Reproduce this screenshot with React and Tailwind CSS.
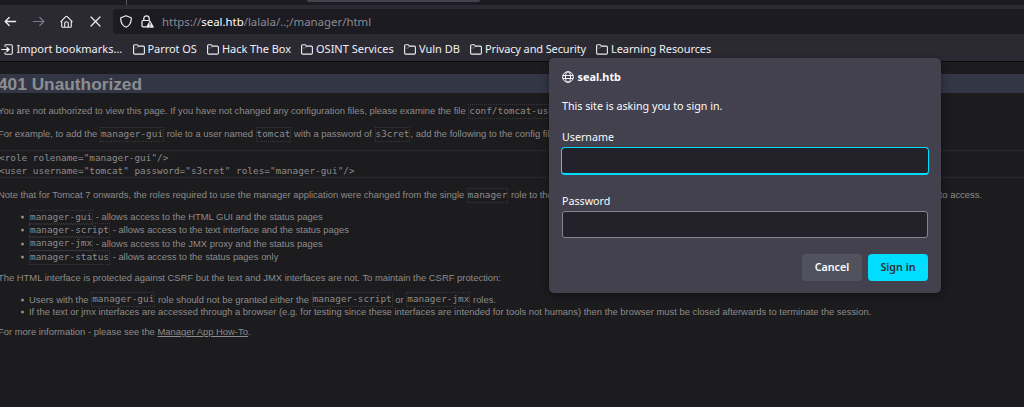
import React from "react";

const Code = ({ children }) => (
  <code className="inline-block h-[15px] border border-dotted border-[#38383a] font-['DejaVu_Sans_Mono',monospace] text-[9.4px] leading-[12px]">
    {children}
  </code>
);

const Line = ({ children, className = "" }) => (
  <div className={"flex h-[15px] items-center whitespace-pre " + className}>{children}</div>
);

const Item = ({ children, className = "" }) => (
  <li className={"relative flex items-center whitespace-pre pl-[30px] " + className}>
    <span className="absolute left-[21.5px] top-1/2 size-[3px] -translate-y-1/2 rounded-full bg-[#8c8c8c]" />
    {children}
  </li>
);

const Folder = () => (
  <svg className="h-[11px] w-3 shrink-0" viewBox="0 0 12 11" fill="none" stroke="#f0f0f4" strokeWidth="1.1" strokeLinejoin="round">
    <path d="M.6 9V1.9c0-.7.4-1.1 1.1-1.1h2.2c.4 0 .7.2.9.5l.6.8h4.900c.7 0 1.100.4 1.100 1.100V9c0 .7-.4 1.100-1.100 1.100H1.700C1 10.100.6 9.700.6 9Z" />
    <path d="M1 4h3.200l1.300-1.700" strokeWidth=".6" opacity=".5" />
  </svg>
);

const bookmarks = [
  ["Parrot OS", "w-[64px] mr-[10.500px]", "tracking-[-0.07px]"],
  ["Hack The Box", "w-[83.500px] mr-[10.500px]", "tracking-[-0.06px]"],
  ["OSINT Services", "w-[93px] mr-[10px]", ""],
  ["Vuln DB", "w-[56px] mr-[10px]", "tracking-[-0.03px]"],
  ["Privacy and Security", "w-[116px] mr-[10px]", "tracking-[-0.12px]"],
  ["Learning Resources", "w-[116px]", "tracking-[-0.08px]"],
];

function Browser() {
  return (
    <header className="h-[62px] border-b border-[#0c0c0d] bg-[#2b2a33] text-[#f0f0f4]">
      <div className="flex h-[5px] items-start bg-[#1c1b22]">
        <div className="ml-[126px] h-[5px] w-px bg-[#5b5a63]" />
        <div className="ml-[180px] h-[2px] w-[173px] rounded-b-[2px] bg-[#42414d]" />
      </div>
      <div className="flex h-[33px] items-center">
        <svg className="ml-[4px] size-[13px]" viewBox="0 0 13 13" fill="none" stroke="currentColor" strokeWidth="1.300" strokeLinecap="round" strokeLinejoin="round">
          <path d="M11.600 6.500H1.200M5.200 2.500l-4 4 4 4" />
        </svg>
        <svg className="ml-[15px] size-[13px] text-[#7c7b84]" viewBox="0 0 13 13" fill="none" stroke="currentColor" strokeWidth="1.200" strokeLinecap="round" strokeLinejoin="round">
          <path d="M1.400 6.500h10.400M7.800 2.500l4 4-4 4" />
        </svg>
        <svg className="ml-[14.500px] size-[13px]" viewBox="0 0 13 13" fill="none" stroke="currentColor" strokeWidth="1.100" strokeLinecap="round" strokeLinejoin="round">
          <path d="M.9 6.700 5.700 1.600c.5-.5 1.100-.5 1.600 0l4.800 5.100M1.700 6.200v4.800c0 .9.500 1.300 1.300 1.300h7c.8 0 1.300-.4 1.300-1.300V6.200M4.700 12.200V8.500c0-1.100.7-1.800 1.800-1.800s1.800.7 1.800 1.800v3.700" />
        </svg>
        <svg className="ml-[17px] size-[11px]" viewBox="0 0 11 11" fill="none" stroke="currentColor" strokeWidth="1.200" strokeLinecap="round">
          <path d="m1 1 9 9M10 1 1 10" />
        </svg>
        <div className="ml-[12.500px] flex h-[25px] flex-1 items-center rounded-l-[4px] bg-[#1c1b22]">
          <svg className="ml-[6.500px] h-[13px] w-[12px]" viewBox="0 0 12 13" fill="none" stroke="currentColor" strokeWidth="1.200" strokeLinejoin="round">
            <path d="M6 .7 11.200 2.700c.3 4.200-1 7.700-5.200 9.600C1.800 10.400.5 6.900.8 2.700Z" />
          </svg>
          <svg className="ml-[9px] size-[13px]" viewBox="0 0 13 13" fill="none" stroke="currentColor" strokeWidth="1.200" strokeLinejoin="round">
            <path d="M2.800 5.500V3.600C2.800 1.900 3.900.8 5.500.8s2.700 1.100 2.700 2.800v1.900M5.500 11.900H2c-.7 0-1-.4-1-1V6.600c0-.7.3-1.100 1-1.100h6.700" />
            <path fill="currentColor" strokeWidth=".8" d="m9 5.900 3.500 6.300h-7Z" />
            <path stroke="#1c1b22" strokeWidth="1" d="M9 7.800v2M9 10.600v.9" />
          </svg>
          <div className="ml-[8.500px] font-['Noto_Sans',sans-serif] text-[11.400px] leading-4 text-[#8c8b93]">
            https://<span className="text-[#fbfbfe]">seal.htb</span>/lalala/..;/manager/html
          </div>
        </div>
      </div>
      <div className="flex h-[22px] items-center font-['Noto_Sans',sans-serif] text-[11px] leading-4">
        <div className="mr-[10.500px] flex w-[122px] shrink-0 items-center whitespace-nowrap">
          <svg className="ml-[1px] h-[11px] w-[12px] shrink-0" viewBox="0 0 12 11" fill="none" stroke="currentColor" strokeWidth="1.100" strokeLinejoin="round">
            <path d="M4 2.800V1.600C4 1.100 4.300.8 4.800.8h5.400c.7 0 1.100.4 1.100 1.100v7.200c0 .7-.4 1.100-1.100 1.100H4.800c-.5 0-.8-.3-.8-.8V8.200M.3 5.500H6" />
            <path fill="currentColor" strokeWidth=".6" d="m5.800 2.900 3 2.600-3 2.600Z" />
          </svg>
          <span className="ml-[3.500px]">Import bookmarks…</span>
        </div>
        {bookmarks.map(([name, box, tracking]) => (
          <div key={name} className={"flex shrink-0 items-center whitespace-nowrap " + box}>
            <Folder />
            <span className={"ml-[3px] " + tracking}>{name}</span>
          </div>
        ))}
      </div>
    </header>
  );
}

function TomcatPage() {
  return (
    <main className="-ml-[2px] w-[1026px] pt-3 font-['Liberation_Sans',Arial,sans-serif] text-[9.410px] text-[#8c8c8c]">
      <h1 className="h-[19px] bg-[#333645] text-[17.300px] font-bold leading-[20px] text-[#8d8d90]">401 Unauthorized</h1>
      <Line className="mt-[10.500px]">
        You are not authorized to view this page. If you have not changed any configuration files, please examine the file <Code>conf/tomcat-users.xml</Code>
      </Line>
      <Line className="mt-[8px]">
        For example, to add the <Code>manager-gui</Code> role to a user named <Code>tomcat</Code> with a password of <Code>s3cret</Code>, add the following to the config file listed above.
      </Line>
      <pre className="mt-[8.500px] h-[28px] border-y border-dotted border-[#38383a] pl-px font-['DejaVu_Sans_Mono',monospace] text-[9.380px] leading-[13px]">
        {'<role rolename="manager-gui"/>\n<user username="tomcat" password="s3cret" roles="manager-gui"/>'}
      </pre>
      <Line className="mt-[10px]">
        Note that for Tomcat 7 onwards, the roles required to use the manager application were changed from the single <Code>manager</Code> role to the following four roles. You will need to assign the role(s) required for the functionality you wish to access.
      </Line>
      <ul className="mt-[7.500px] pl-px">
        <Item className="h-[13.300px]"><Code>manager-gui</Code> - allows access to the HTML GUI and the status pages</Item>
        <Item className="h-[13.300px]"><Code>manager-script</Code> - allows access to the text interface and the status pages</Item>
        <Item className="h-[13.300px]"><Code>manager-jmx</Code> - allows access to the JMX proxy and the status pages</Item>
        <Item className="h-[13.300px]"><Code>manager-status</Code> - allows access to the status pages only</Item>
      </ul>
      <Line className="mt-[7px]">
        The HTML interface is protected against CSRF but the text and JMX interfaces are not. To maintain the CSRF protection:
      </Line>
      <ul className="mt-[7.500px] pl-px">
        <Item className="h-[13px]">
          Users with the <Code>manager-gui</Code> role should not be granted either the <Code>manager-script</Code> or <Code>manager-jmx</Code> roles.
        </Item>
        <Item className="h-[11px]">
          If the text or jmx interfaces are accessed through a browser (e.g. for testing since these interfaces are intended for tools not humans) then the browser must be closed afterwards to terminate the session.
        </Item>
      </ul>
      <Line className="mt-[7.500px]">
        For more information - please see the <a className="underline">Manager App How-To</a>.
      </Line>
    </main>
  );
}

function SignInDialog() {
  return (
    <div role="dialog" className="absolute left-[549px] top-[58px] flex h-[235px] w-[392px] flex-col rounded-[5px] bg-[#42414d] px-[13px] font-['Noto_Sans',sans-serif] text-[10.700px] leading-4 text-[#fbfbfe] shadow-[0_2px_10px_rgba(0,0,0,0.4)]">
      <div className="mt-[11px] flex items-center">
        <svg className="size-[12px]" viewBox="0 0 12 12" fill="none" stroke="currentColor" strokeWidth="1">
          <circle cx="6" cy="6" r="5.300" />
          <ellipse cx="6" cy="6" rx="2.500" ry="5.300" />
          <path d="M.7 4.500h10.600M.7 7.500h10.600" strokeWidth=".9" />
        </svg>
        <span className="ml-[3.500px] text-[10.900px] font-bold">seal.htb</span>
      </div>
      <p className="mt-[13px]">This site is asking you to sign in.</p>
      <label className="mt-[15px]">Username</label>
      <input className="-mx-px mt-[1.500px] block h-[28px] w-[368px] rounded-[4px] border-[1.500px] border-b-2 border-[#00ddff] bg-[#23222b] outline-none" />
      <label className="mt-[18px]">Password</label>
      <input className="mt-[2px] block h-[27px] w-[366px] rounded-[3px] border border-[#85848e] bg-[#23222b] outline-none" />
      <div className="mt-[16px] flex justify-end gap-[6px] text-[10.700px] font-semibold">
        <button className="h-[27px] w-[60px] rounded-[4px] bg-[#52515e]">Cancel</button>
        <button className="h-[27px] w-[60px] rounded-[4px] bg-[#00ddff] text-[#2b2a33]">Sign in</button>
      </div>
    </div>
  );
}

export default function App() {
  return (
    <div className="relative h-[407px] w-[1024px] overflow-hidden bg-[#1c1b1d]">
      <Browser />
      <TomcatPage />
      <SignInDialog />
    </div>
  );
}
